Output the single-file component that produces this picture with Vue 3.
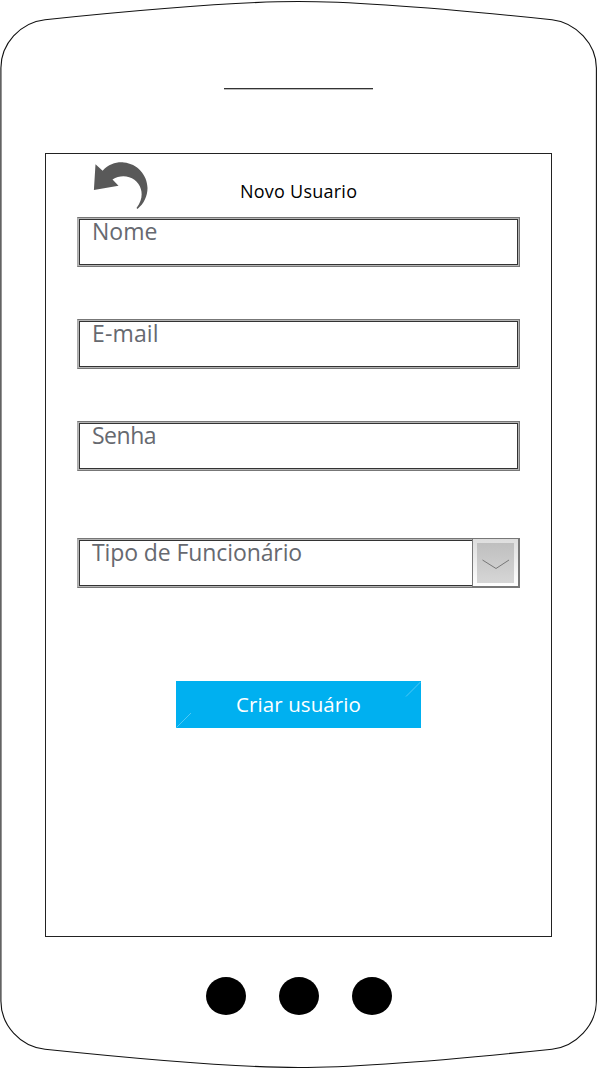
<script setup>
const fields = [
  { id: 'nome', label: 'Nome' },
  { id: 'email', label: 'E-mail' },
  { id: 'senha', label: 'Senha' },
  { id: 'tipo', label: 'Tipo de Funcionário', select: true },
]
</script>

<template>
  <main class="phone">
    <svg class="outline" viewBox="0 0 597 1069" aria-hidden="true">
      <path d="M.9 68C.9 44 20 22.500 45 19.700Q220 1.500 298.500 1.500T552 19.700C576 22.500 596.400 44 596.400 68V1001C596.400 1025 576 1046.500 552 1049.200Q377 1067.500 298.500 1067.500T45 1049.200C20 1046.500 .9 1025 .9 1001Z" />
    </svg>
    <div class="speaker"></div>
    <section class="screen">
      <header class="header">
        <svg class="back" viewBox="0 0 56 48" aria-label="Voltar">
          <path d="M2.500 2.300 9.600 8.700C16 1.700 24 -.2 31 .5C44 1.700 54.300 12.700 54.500 26C54.600 33.500 51 42 44.500 46.900L43.500 46C48.500 40 49.500 33 48 27.500C45 15.500 30.500 10.500 19.500 17.500L25.500 23.800.9 27.900Z" />
        </svg>
        <h1 class="title">Novo Usuario</h1>
      </header>
      <form class="form" @submit.prevent>
        <div v-for="f in fields" :key="f.id" class="field" :class="f.id">
          <span class="label">{{ f.label }}</span>
          <span v-if="f.select" class="drop">
            <svg viewBox="0 0 37 40"><path d="M5.500 17 19 25.500 32 17" /></svg>
          </span>
        </div>
        <button class="submit" type="submit">
          <svg class="corners" viewBox="0 0 245 47" aria-hidden="true">
            <path d="M.5 46.500 15 32M230 15.500 244.500 1" />
          </svg>
          <span class="caption">Criar usuário</span>
        </button>
      </form>
    </section>
    <nav class="keys"><i></i><i></i><i></i></nav>
  </main>
</template>

<style>
body { background: #fff; }
</style>

<style scoped>
* { box-sizing: border-box; }
.phone {
  position: relative;
  display: flex;
  flex-direction: column;
  align-items: center;
  width: 597px;
  height: 1069px;
  padding-top: 88px;
  overflow: hidden;
  font-family: "Open Sans", "Noto Sans", sans-serif;
}
.outline { position: absolute; inset: 0; width: 597px; height: 1069px; pointer-events: none; }
.outline path { fill: none; stroke: #111; stroke-width: 1.1; }
.speaker { flex: none; width: 149px; height: 2px; border-top: 1px solid #333; border-bottom: 1px solid #bbb; }
.screen {
  flex: none;
  width: 507px;
  height: 784px;
  margin-top: 63px;
  border: 1px solid #222;
}
.header { display: flex; height: 63px; padding: 8px 0 0 47px; }
.back { flex: none; width: 56px; height: 48px; }
.back path { fill: #595959; }
.title {
  margin: 16px 0 0 91px;
  font-size: 18px;
  line-height: 26px;
  font-weight: 400;
  letter-spacing: .24px;
  color: #000;
  white-space: nowrap;
}
.form { display: flex; flex-direction: column; padding-left: 31px; }
.field {
  display: flex;
  justify-content: space-between;
  width: 443px;
  height: 50px;
  margin-bottom: 52px;
  padding-left: 12px;
  border: 1px solid #777;
  border-left-color: #aaa;
  box-shadow: inset 0 0 0 1px #b5b5b5, inset 0 0 0 2px #333;
}
.senha { margin-bottom: 67px; }
.tipo { margin-bottom: 93px; }
.label { padding-left: 2px; font-size: 23px; line-height: 27px; color: #666970; white-space: nowrap; }
.email .label { letter-spacing: .15px; }
.senha .label { letter-spacing: -.5px; }
.tipo .label { letter-spacing: -.1px; }
.drop {
  width: 48px;
  height: 50px;
  margin: -1px -1px 0 0;
  padding: 4px;
  border: 1px solid #777;
  border-right-width: 2px;
  border-bottom-width: 2px;
  background: linear-gradient(#ddd, #fff);
}
.drop svg { display: block; width: 37px; height: 40px; background: linear-gradient(#bfbfbf, #d6d6d6); }
.drop path { fill: none; stroke: #777; stroke-width: 1; }
.submit {
  position: relative;
  width: 245px;
  height: 47px;
  margin-left: 99px;
  padding: 0;
  border: 0;
  background: #00b0f0;
  color: #fff;
  font: 400 20.5px/45px "Open Sans", "Noto Sans", sans-serif;
}
.caption { letter-spacing: .1px; }
.corners { position: absolute; inset: 0; width: 245px; height: 47px; }
.corners path { fill: none; stroke: #62cff6; stroke-width: .8; }
.keys { display: flex; gap: 33px; margin-top: 39.5px; }
.keys i { width: 40px; height: 38px; border-radius: 50%; background: #000; }
</style>
